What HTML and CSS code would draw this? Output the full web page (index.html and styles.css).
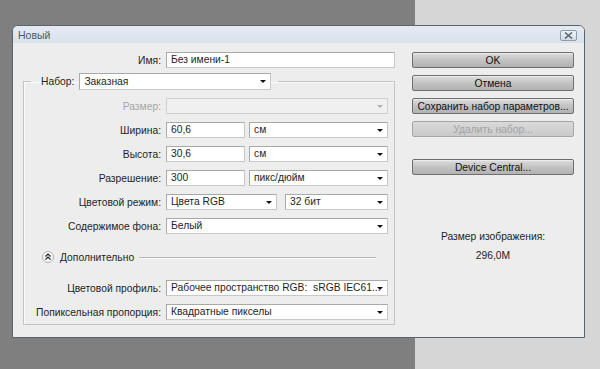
FILE: index.html
```html
<!DOCTYPE html>
<html lang="ru">
<head>
    <meta charset="UTF-8">
    <title>Новый</title>
    <link rel="stylesheet" href="styles.css">
</head>
<body>
    <div class="dialog">
        <div class="title-bar">
            <span class="title">Новый</span>
            <span class="close-btn">
                <svg width="9" height="7" viewBox="0 0 9 7"><path d="M1 0.5 L8 6.5 M8 0.5 L1 6.5" stroke="#5a6878" stroke-width="1.6" fill="none"/></svg>
            </span>
        </div>

        <div class="dialog-body">
            <div class="left-col">
                <div class="row">
                    <label class="lbl name-lbl">Имя:</label>
                    <div class="field input wide-name">Без имени-1</div>
                </div>

                <fieldset class="group">
                    <legend class="preset">
                        <span>Набор:</span>
                        <div class="field select preset-select">Заказная<i class="arrow"></i></div>
                    </legend>

                    <div class="rows">
                        <div class="row">
                            <label class="lbl disabled">Размер:</label>
                            <div class="field select full disabled-field"><i class="arrow"></i></div>
                        </div>
                        <div class="row">
                            <label class="lbl">Ширина:</label>
                            <div class="pair">
                                <div class="field input num">60,6</div>
                                <div class="field select unit">см<i class="arrow"></i></div>
                            </div>
                        </div>
                        <div class="row">
                            <label class="lbl">Высота:</label>
                            <div class="pair">
                                <div class="field input num">30,6</div>
                                <div class="field select unit">см<i class="arrow"></i></div>
                            </div>
                        </div>
                        <div class="row">
                            <label class="lbl">Разрешение:</label>
                            <div class="pair">
                                <div class="field input num">300</div>
                                <div class="field select unit">пикс/дюйм<i class="arrow"></i></div>
                            </div>
                        </div>
                        <div class="row">
                            <label class="lbl">Цветовой режим:</label>
                            <div class="pair mode-pair">
                                <div class="field select mode">Цвета RGB<i class="arrow"></i></div>
                                <div class="field select bits">32 бит<i class="arrow"></i></div>
                            </div>
                        </div>
                        <div class="row">
                            <label class="lbl">Содержимое фона:</label>
                            <div class="field select full">Белый<i class="arrow"></i></div>
                        </div>

                        <div class="advanced">
                            <svg class="adv-icon" width="12" height="12" viewBox="0 0 12 12">
                                <circle cx="6" cy="6" r="5.5" fill="#f4f4f4" stroke="#b4b4b4"/>
                                <path d="M3.5 5.5 L6 3 L8.5 5.5 M3.5 8.5 L6 6 L8.5 8.5" stroke="#222" stroke-width="1.2" fill="none"/>
                            </svg>
                            <span>Дополнительно</span>
                            <div class="adv-line"></div>
                        </div>

                        <div class="row">
                            <label class="lbl">Цветовой профиль:</label>
                            <div class="field select full">Рабочее пространство RGB:&nbsp; sRGB IEC61...<i class="arrow"></i></div>
                        </div>
                        <div class="row">
                            <label class="lbl">Попиксельная пропорция:</label>
                            <div class="field select full">Квадратные пикселы<i class="arrow"></i></div>
                        </div>
                    </div>
                </fieldset>
            </div>

            <div class="right-col">
                <button class="btn">OK</button>
                <button class="btn">Отмена</button>
                <button class="btn">Сохранить набор параметров...</button>
                <button class="btn" disabled>Удалить набор...</button>
                <button class="btn device">Device Central...</button>

                <div class="image-size">
                    <p>Размер изображения:</p>
                    <p class="size-value">296,0M</p>
                </div>
            </div>
        </div>
    </div>
</body>
</html>
```

FILE: styles.css
```css
:root {
    --desk-dark: #7f7f7f;
    --desk-light: #d6d6d6;
    --dialog-bg: #ededed;
    --text-color: #1e1e1e;
    --field-border: #a9a9a9;
    --group-border: #c3c3c3;
}

* {
    margin: 0;
    padding: 0;
    box-sizing: border-box;
    font-family: 'Liberation Sans', Arial, sans-serif;
}

body {
    height: 369px;
    overflow: hidden;
    background: linear-gradient(to right, var(--desk-dark) 0 415px, var(--desk-light) 415px);
    padding: 25px 0 0 12px;
    font-size: 10.3px;
    color: var(--text-color);
}

.dialog {
    width: 573px;
    height: 313px;
    border: 1px solid #5b636d;
    border-radius: 6px 6px 0 0;
    background-color: var(--dialog-bg);
    overflow: hidden;
}

.title-bar {
    height: 17px;
    display: flex;
    align-items: center;
    justify-content: space-between;
    padding: 0 7px 0 5px;
    background: linear-gradient(#e4eaf1, #d9e2ec);
}

.title {
    color: #4d5a68;
    font-size: 10.5px;
}

.close-btn {
    width: 17px;
    height: 11px;
    margin-top: 1px;
    border: 1px solid #8e9cac;
    border-radius: 2px;
    background: linear-gradient(#eef2f6, #d3dbe4);
    display: flex;
    align-items: center;
    justify-content: center;
}

.dialog-body {
    display: flex;
    gap: 17px;
    padding: 9px 10px 0 10px;
}

.left-col {
    width: 372px;
}

.row {
    display: flex;
    align-items: center;
    gap: 5px;
    height: 16px;
}

.lbl {
    width: 137px;
    flex: none;
    text-align: right;
}

.name-lbl {
    width: 138px;
}

.lbl.disabled {
    color: #a6a6a6;
}

.field {
    position: relative;
    height: 16px;
    line-height: 14px;
    padding-left: 4px;
    background-color: #fff;
    border: 1px solid var(--field-border);
    border-right-color: #c8c8c8;
    border-bottom-color: #c8c8c8;
    white-space: nowrap;
    overflow: hidden;
    flex: none;
}

.wide-name {
    width: 229px;
}

.arrow {
    position: absolute;
    right: 4px;
    top: 6px;
    border-left: 3px solid transparent;
    border-right: 3px solid transparent;
    border-top: 3px solid #111;
}

.group {
    margin-top: 5px;
    width: 372px;
    min-width: 0;
    border: 1px solid var(--group-border);
    box-shadow: inset 1px 1px 0 #fafafa;
    padding: 8px 6px 4px 0;
}

.preset {
    margin-left: 7px;
    padding: 0 7px 0 10px;
    display: flex;
    align-items: center;
    gap: 5px;
    height: 17px;
}

.preset-select {
    width: 192px;
    height: 17px;
    line-height: 15px;
}

.rows {
    display: flex;
    flex-direction: column;
    gap: 8px;
}

.full {
    width: 222px;
}

.disabled-field {
    background-color: #f0f0f0;
    border-color: #d0d0d0;
}

.disabled-field .arrow {
    border-top-color: #b0b0b0;
}

.pair {
    display: flex;
    gap: 4px;
}

.num {
    width: 79px;
}

.unit {
    width: 139px;
}

.mode-pair {
    gap: 8px;
}

.mode {
    width: 111px;
}

.bits {
    width: 103px;
}

.advanced {
    display: flex;
    align-items: center;
    gap: 6px;
    height: 12px;
    margin: 9px 12px 9px 18px;
}

.adv-icon {
    flex: none;
}

.adv-line {
    flex: 1;
    height: 1px;
    margin-left: -1px;
    background-color: #b4b4b4;
    box-shadow: 0 1px 0 #fbfbfb;
}

.right-col {
    width: 162px;
    display: flex;
    flex-direction: column;
    gap: 7px;
}

.btn {
    height: 16px;
    font-size: 10.3px;
    white-space: nowrap;
    color: #111;
    border: 1px solid #6f6f6f;
    border-radius: 2px;
    background: linear-gradient(#dedede, #c2c2c2 50%, #b2b2b2);
    box-shadow: inset 0 1px 0 #ececec;
}

.btn:disabled {
    color: #a2a2a2;
    border-color: #a6a6a6;
    background: linear-gradient(#d9d9d9, #cacaca);
    box-shadow: none;
}

.device {
    margin-top: 15px;
}

.image-size {
    margin-top: 48px;
    text-align: center;
    line-height: 14px;
}

.size-value {
    margin-top: 5px;
}
```
